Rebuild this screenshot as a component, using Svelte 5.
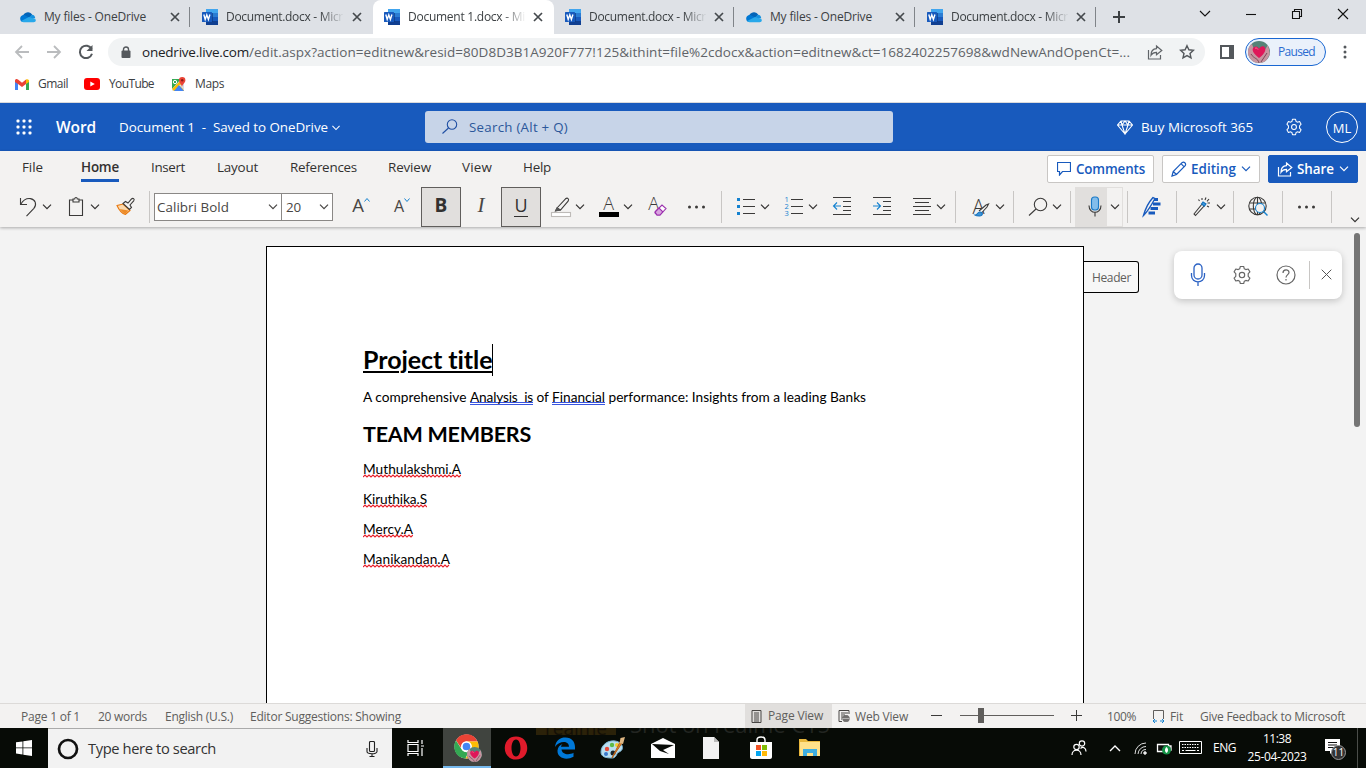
<script>
  const tabs = [
    { icon: 'cloud', title: 'My files - OneDrive', w: 102 },
    { icon: 'word', title: 'Document.docx - Micr', w: 117 },
    { icon: 'word', title: 'Document 1.docx - Mi', w: 117, active: true },
    { icon: 'word', title: 'Document.docx - Micr', w: 117 },
    { icon: 'cloud', title: 'My files - OneDrive', w: 102 },
    { icon: 'word', title: 'Document.docx - Micr', w: 117 }
  ];
  const menus = [
    { t: 'File', w: 21, gap: 22 },
    { t: 'Home', w: 38, gap: 38, active: true },
    { t: 'Insert', w: 34, gap: 32 },
    { t: 'Layout', w: 41, gap: 32 },
    { t: 'References', w: 67, gap: 32 },
    { t: 'Review', w: 43, gap: 31 },
    { t: 'View', w: 30, gap: 31 },
    { t: 'Help', w: 28, gap: 31 }
  ];
  const left = [
    ['undo', 16], ['chev', 0], ['clip', 10], ['chev', 0], ['painter', 11], ['sep', 12]
  ];
  const right = [
    ['highlight', 8], ['chev', 0], ['fontcolor', 10], ['chev', 0], ['clear', 10], ['dots', 16], ['sep', 12],
    ['bullets', 12], ['chev', 0], ['numbers', 10], ['chev', 0], ['outdent', 10], ['indent', 16], ['align', 16], ['chev', 0], ['sep', 7],
    ['styles', 13], ['chev', 0], ['sep', 6], ['find', 12], ['chev', 0], ['sep', 6]
  ];
  const far = [
    ['sep', 5], ['editor', 12], ['sep', 12], ['wand', 13], ['chev', 0], ['sep', 5],
    ['globe', 12], ['sep', 12], ['dots', 12], ['sep', 12]
  ];
  const members = [
    { t: 'Muthulakshmi.A', w: 98 },
    { t: 'Kiruthika.S', w: 64 },
    { t: 'Mercy.A', w: 50 },
    { t: 'Manikandan.A', w: 87 }
  ];

  // Spreads the letters of a label over a fixed width.
  function fit(node, width) {
    const natural = node.getBoundingClientRect().width;
    node.style.letterSpacing = (width - natural) / node.textContent.length + 'px';
  }
  function wave(w) {
    let d = 'M0 3';
    for (let x = 2, up = true; x <= w; x += 2, up = !up) d += `L${x} ${up ? 1 : 3}`;
    return d;
  }
</script>

{#snippet cloud()}
  <svg width="16" height="16" viewBox="0 0 16 16"><path d="M2 8.500C3 5 6 2.600 9 3.400c1.500.3 2.500 1.100 3.200 2.400L9.600 9z" fill="#0364b8"/><path d="M.4 10.800C-.6 7.700 2 5.500 4.500 6l5.500 3-6.800 4C1.800 13.200.7 12.200.4 10.800z" fill="#0078d4"/><path d="M9 8.200 12 5.800c2 .1 3 1.700 3.300 3.400L12 10z" fill="#1490df"/><path d="M1.100 12.100 9 8.100l6.500 2.100c.9 1.300-.2 3-1.900 3H3.500c-1 0-1.800-.4-2.400-1.100z" fill="#28a8ea"/></svg>
{/snippet}
{#snippet word()}
  <svg width="16" height="16" viewBox="0 0 16 16"><path d="M4 0h12v4H4z" fill="#41a5ee"/><path d="M4 4h12v4H4z" fill="#2b7cd3"/><path d="M4 8h12v4H4z" fill="#185abd"/><path d="M4 12h12v4H4z" fill="#103f91"/><path d="M4 4h7v9H4z" fill="#0d3577" opacity=".6"/><rect y="3" width="10" height="10" rx=".6" fill="#185abd"/><path d="m1.800 5.500 1.400 5 1.600-4.700 1.600 4.700 1.500-5" fill="none" stroke="#fff" stroke-width="1.400"/></svg>
{/snippet}
{#snippet chev(w = 9, c = 'currentColor')}
  <svg width={w} height="6" viewBox="0 0 9 6"><path d="m.5.700 4 4 4-4" fill="none" stroke={c} stroke-width="1.200"/></svg>
{/snippet}
{#snippet gear(n, c)}
  <svg width={n} height={n} viewBox="0 0 20 20" fill="none" stroke={c} stroke-width="1.150"><circle cx="10" cy="10" r="2.700"/><path stroke-linejoin="round" d="M8.300 1.500h3.400l.6 2.300 1.500.8 2.400-.6 1.700 2.900-1.700 1.800v2.600l1.700 1.800-1.700 2.900-2.400-.6-1.500.8-.6 2.300H8.300l-.6-2.300-1.500-.8-2.400.6-1.700-2.900 1.700-1.800V8.700L2.100 6.900 3.800 4l2.400.6 1.500-.8z"/></svg>
{/snippet}
{#snippet tool(k)}
  {#if k === 'chev'}{@render chev(10)}
  {:else}
  <svg width="24" height="24" viewBox="0 0 24 24" fill="none" stroke="#3b3a39" stroke-width="1.100">
    {#if k === 'undo'}<path d="M4.500 3v6.500H11M4.800 9.200C7 5.500 10.500 3 14.500 3.600c5 .9 6.600 6 3.400 9.800l-7.400 7.800"/>
    {:else if k === 'clip'}<path d="M9 5H5.500v15.500h13V5H15M9 7V4h1.700c.1-2 2.500-2 2.600 0H15v3z"/>
    {:else if k === 'painter'}<path d="m4 10.500 6-1.500 7 6.500-4.500 4C9 18.500 6 15 4 10.500z" fill="#fbd9ad" stroke="#e8770e"/><path d="m6.500 14 9 1.500-3.500 4z" fill="#ed8b27" stroke="none"/><path d="m10 8.500 2.500-2 2.500 1.500 3.500-4c1.500-1.500 3.500 0 2.200 1.800L17 10l1.500 2.500-2 2z" fill="#f3f2f1"/>
    {:else if k === 'highlight'}<rect x="2.500" y="17.500" width="19" height="4" fill="#fff" stroke="#bebbb8"/><path d="m8 13 8.500-9.200c2-1.500 4 .2 2.600 2.400L11.500 15zm0 0-1.500 3 4.700-1"/><path d="m8 12-2 4h4l1.500-1z" fill="#555" stroke="none"/>
    {:else if k === 'fontcolor'}<text class="glyph" x="6.200" y="15" font-size="18">A</text><path d="M2 17h20v5H2z" fill="#000" stroke="none"/>
    {:else if k === 'clear'}<text class="glyph" x="3.200" y="15" font-size="18">A</text><path d="m11 16 6-6 4 3.500-6 6.500H12l-2-2z" fill="#fff" stroke="#9b2fae"/><path d="m10 17 4-4 3.800 3.800L15 20h-3z" fill="#d9a4df" stroke="#9b2fae"/>
    {:else if k === 'dots'}<g fill="#3b3a39" stroke="none"><circle cx="4.500" cy="12" r="1.500"/><circle cx="11.500" cy="12" r="1.500"/><circle cx="18.500" cy="12" r="1.500"/></g>
    {:else if k === 'bullets'}<path d="M9 4.500h12M9 11.500h12M9 18.500h12"/><path d="M3 3h3v3H3zM3 10h3v3H3zM3 17h3v3H3z" fill="#1482d0" stroke="none"/>
    {:else if k === 'numbers'}<path d="M9 4.500h12M9 11.500h12M9 18.500h12"/><g class="num"><text x="2.500" y="7">1</text><text x="2.500" y="14">2</text><text x="2.500" y="21">3</text></g>
    {:else if k === 'outdent'}<path d="M3 2.500h18M13 6.500h8M13 11.500h8M13 15.500h8M3 19.500h18"/><path stroke="#1482d0" d="M11 11H3.500m3.500-3.500L3.500 11 7 14.500"/>
    {:else if k === 'indent'}<path d="M3 2.500h18M13 6.500h8M13 11.500h8M13 15.500h8M3 19.500h18"/><path stroke="#1482d0" d="M3 11h7.500M7 7.500l3.500 3.500L7 14.500"/>
    {:else if k === 'align'}<path d="M3 3.500h18M5 7.500h14M3 11.500h18M5 15.500h14M3 19.500h18"/>
    {:else if k === 'styles'}<text class="glyph" x="3.500" y="18.500" font-size="20">A</text><path d="m10 16 7-6 2.500-1-1.500 3-5.500 6" fill="#f3f2f1"/><path d="M6 20c3 0 2-3 5-3 3.500 0 3 4-.5 4-2 0-3.500-.2-4.500-1z" fill="#3b94d9" stroke="#1472bd"/>
    {:else if k === 'find'}<circle cx="14.500" cy="9.500" r="6.200"/><path d="m10 14-7 6.500"/>
    {:else if k === 'mic'}<rect x="8.500" y="2" width="7" height="13" rx="3" fill="#83bdeb" stroke="#1b7ac7"/><path d="M6 10.500c0 9 12 9 12 0M12 17.500v4"/>
    {:else if k === 'editor'}<g stroke="#185abd"><path d="M3.500 20.500C5 15 8 8 13 2.500l2 1C11.500 10 8 16 3.500 20.500z" stroke-width="1.400"/><path d="M14 4.500h4M13 9h7.500M10.500 13.500H18M8.500 18h6.500" stroke-width="3"/></g>
    {:else if k === 'wand'}<path d="m4 19 8.500-10.500 2 2L5.500 20.500z"/><path d="m11.500 9 1.500-2 3 2-1.700 2.200z" fill="#3f9bde" stroke="#1472bd"/><path d="M12 3v2M8.500 4.500l1 1.500M16 2.500 15 5M19 4l-2 2.300M20 8h-2.500M19 12l-2-1"/>
    {:else if k === 'globe'}<circle cx="11.500" cy="11" r="8.700"/><ellipse cx="11.500" cy="11" rx="4.200" ry="8.700"/><path d="M3.500 8h16M3.500 14h9M11.500 2.300v17.400"/><circle cx="14" cy="13" r="4.500" fill="#f3f2f1" stroke="#1482d0"/><path stroke="#1482d0" stroke-width="1.500" d="m17.500 16.500 4 4"/>
    {/if}
  </svg>
  {/if}
{/snippet}
{#snippet tools(list)}
  {#each list as [k, gap]}
    <div class="tool {k === 'sep' ? 'sep' : k === 'chev' ? 'tchev' : ''}" style="margin-left:{gap}px">{#if k !== 'sep'}{@render tool(k)}{/if}</div>
  {/each}
{/snippet}
{#snippet share(c)}
  <svg width="16" height="16" viewBox="0 0 16 16" fill="none" stroke={c} stroke-width="1.200"><path d="M1.500 6v9h12v-4M9.500 2l5.300 4.500-5.300 4.300V8.300C7 8.300 5.300 9 4 11.200c0-4 2.300-6.300 5.500-6.500z"/></svg>
{/snippet}
{#snippet heart(n)}
  <svg width={n} height={n} viewBox="0 0 22 22"><defs><clipPath id="av{n}"><circle cx="11" cy="11" r="11"/></clipPath></defs><g clip-path="url(#av{n})"><path d="M0 0h22v22H0z" fill="#568377"/><path d="M0 5 4 3l3 8 4 5 5-6 4-6 2 9-5 9H4L0 16z" fill="#c894a0"/><path d="M3 13c3 5 7 4 8 9M19 12l-6 9" stroke="#764b59" fill="none"/><path d="M11 17C7 14 3.500 10 5 7c1.800-2.500 5-2 6 .8C12.500 5 15.500 4.500 17 6.800 18.500 10 15 14.500 11 17z" fill="#df1759"/><path d="M7 7.500c1-1 2-.5 3 1" stroke="#ff7598" fill="none"/></g></svg>
{/snippet}

<div class="screen">
  <div class="tabstrip">
    {#each tabs as tab, i}
      <div class="tab" class:active={tab.active} class:line={i !== 1 && i !== 2}>
        {#if tab.icon === 'cloud'}{@render cloud()}{:else}{@render word()}{/if}
        <div class="ttl" class:fade={tab.icon === 'word'}><span class="t" use:fit={tab.w}>{tab.title}</span></div>
        <svg class="x" width="10" height="10" viewBox="0 0 10 10"><path d="m1 1 8 8M9 1 1 9" stroke="#45494d" stroke-width="1.700"/></svg>
      </div>
    {/each}
    <svg class="plus" width="12" height="12" viewBox="0 0 12 12"><path d="M6 0v12M0 6h12" stroke="#3c4043" stroke-width="2"/></svg>
    <div class="wincontrols">
      <svg width="12" height="12" viewBox="0 0 12 12"><path d="m1 3 5 5 5-5" /></svg>
      <svg width="12" height="12" viewBox="0 0 12 12"><path d="M1 6.500h10" /></svg>
      <svg width="12" height="12" viewBox="0 0 12 12"><path d="M1.500 3.500h7v7h-7zM3.500 3V1.500h7v7H9" /></svg>
      <svg width="12" height="12" viewBox="0 0 12 12"><path d="m1 1 10 10M11 1 1 11" /></svg>
    </div>
  </div>

  <div class="addressbar">
    <svg width="16" height="16" viewBox="0 0 16 16" fill="none" stroke="#babcbe" stroke-width="1.800"><path d="M15 8H2m6-6L2 8l6 6"/></svg>
    <svg width="16" height="16" viewBox="0 0 16 16" fill="none" stroke="#babcbe" stroke-width="1.800"><path d="M1 8h13M8 2l6 6-6 6"/></svg>
    <svg width="16" height="16" viewBox="0 0 16 16" fill="none" stroke="#54585c" stroke-width="2"><path d="M13.600 5A6.200 6.200 0 1 0 14 9.800"/><path d="M14.500 1v6h-6z" fill="#54585c" stroke="none"/></svg>
    <div class="omni">
      <svg width="10" height="12" viewBox="0 0 10 12"><path d="M2.500 5V3.200c0-3 5-3 5 0V5" fill="none" stroke="#54585c" stroke-width="1.400"/><rect x=".5" y="4.500" width="9" height="7.500" rx="1" fill="#54585c"/></svg>
      <div class="url"><span class="t host" use:fit={107}>onedrive.live.com</span><span class="t" use:fit={881}>/edit.aspx?action=editnew&amp;resid=80D8D3B1A920F777!125&amp;ithint=file%2cdocx&amp;action=editnew&amp;ct=1682402257698&amp;wdNewAndOpenCt=...</span></div>
      {@render share('#606468')}
      <svg class="star" width="16" height="16" viewBox="0 0 16 16"><path d="m8 1.700 1.900 4.100 4.500.5L11 9.400l1 4.500-4-2.300-4 2.300 1-4.500-3.400-3.100 4.500-.5z" fill="none" stroke="#54585c" stroke-width="1.400"/></svg>
    </div>
    <svg class="panel" width="14" height="14" viewBox="0 0 14 14"><rect x="1" y="1" width="12" height="12" fill="#fff" stroke="#54585c" stroke-width="2"/><path d="M9 0h5v14H9z" fill="#54585c"/></svg>
    <div class="paused">{@render heart(22)}<span class="t" use:fit={37}>Paused</span></div>
    <svg class="kebab" width="4" height="14" viewBox="0 0 4 14" fill="#54585c"><circle cx="2" cy="2" r="1.500"/><circle cx="2" cy="7" r="1.500"/><circle cx="2" cy="12" r="1.500"/></svg>
  </div>

  <div class="bookmarks">
    <svg width="14" height="11" viewBox="0 0 14 11"><path d="M0 1v10h3V4z" fill="#4285f4"/><path d="M14 1v10h-3V4z" fill="#34a853"/><path d="M0 1.500C.5-.2 2-.2 3 .6l4 3.200 4-3.200V5L7 8 3 5 0 3z" fill="#ea4335"/><path d="M11 .6c1.500-1 3-.2 3 1.500V3l-3 2z" fill="#fbbc04"/></svg>
    <span class="t" use:fit={30}>Gmail</span>
    <svg class="yt" width="16" height="12" viewBox="0 0 16 12"><rect width="16" height="12" rx="3" fill="#f00"/><path d="m6.300 3.400 4.500 2.600-4.500 2.600z" fill="#fff"/></svg>
    <span class="t" use:fit={45}>YouTube</span>
    <svg class="maps" width="15" height="15" viewBox="0 0 15 15"><path d="M1 2h12v12H1z" fill="#e8eaed"/><path d="M1 2h9L1 12z" fill="#34a853"/><path d="m1 12 8-8 4 10H3z" fill="#fbbc04"/><path d="m3 14 5-6 5 6z" fill="#4285f4"/><path d="m8 8 5-1v6z" fill="#dadce0"/><circle cx="4" cy="5" r="1.700" fill="none" stroke="#fff"/><path d="M11 10C10.500 7 8 6 8 3.200a3.200 3.200 0 0 1 6.400 0C14.400 6 11.500 7 11 10z" fill="#ea4335"/><circle cx="11.200" cy="3.200" r="1.200" fill="#8e1d15"/></svg>
    <span class="t" use:fit={29}>Maps</span>
  </div>

  <div class="suite">
    <svg class="waffle" width="16" height="16" viewBox="0 0 16 16" fill="#fff">
      {#each [0, 1, 2] as r}{#each [0, 1, 2] as c}<rect x={.5 + c * 6} y={.5 + r * 6} width="3" height="3" rx="1"/>{/each}{/each}
    </svg>
    <b class="t brand" use:fit={40}>Word</b>
    <span class="t dn" use:fit={209}>{'Document 1  -  Saved to OneDrive'}</span>
    <span class="dchev">{@render chev(8)}</span>
    <div class="search">
      <svg width="16" height="16" viewBox="0 0 16 16" fill="none" stroke="#1f4fa3" stroke-width="1.100"><circle cx="10" cy="5.500" r="4.700"/><path d="m6.500 9-6 5.500"/></svg>
      <span class="t" use:fit={99}>Search (Alt + Q)</span>
    </div>
    <svg class="gem" width="16" height="15" viewBox="0 0 16 15" fill="none" stroke="#fff" stroke-width="1.100"><path d="M4 1h8l3.500 4L8 14 .5 5zM.5 5h15M4 1l1 4 3 9 3-9 1-4M5 5l3-4 3 4"/></svg>
    <span class="t" use:fit={112}>Buy Microsoft 365</span>
    <span class="sgear">{@render gear(18, '#fff')}</span>
    <div class="avatar">ML</div>
  </div>

  <div class="ribbon">
    <div class="menus">
      {#each menus as m}
        <div class="menu" class:active={m.active} style="margin-left:{m.gap}px"><span class="t" use:fit={m.w}>{m.t}</span></div>
      {/each}
      <div class="actions">
        <div class="btn cm"><svg width="14" height="14" viewBox="0 0 14 14"><path d="M.5.500h13v9H5.500L2.500 13V9.500h-2z" fill="none" stroke="#185abd" stroke-width="1.200"/></svg><b class="t" use:fit={69}>Comments</b></div>
        <div class="btn ed"><svg width="16" height="16" viewBox="0 0 16 16"><path d="M1 15 2.200 10.500 11 1.700c2-1.500 4.500.8 3.200 3L5.500 13.500zM10 2.700l3.200 3.200M2.200 10.500l3.300 3" fill="none" stroke="#185abd" stroke-width="1.200"/></svg><b class="t" use:fit={45}>Editing</b>{@render chev(10)}</div>
        <div class="btn sh">{@render share('#fff')}<b class="t" use:fit={37}>Share</b>{@render chev(10)}</div>
      </div>
    </div>
    <div class="tools">
      {@render tools(left)}
      <div class="combo font"><span class="t" use:fit={72}>Calibri Bold</span>{@render chev(10)}</div>
      <div class="combo size"><span class="t" use:fit={15}>20</span>{@render chev(10)}</div>
      <div class="letter grow">A<svg width="6" height="4" viewBox="0 0 6 4"><path d="m.5 3.500 2.500-3 2.500 3" fill="none" stroke="#1482d0"/></svg></div>
      <div class="letter shrink">A<svg width="6" height="4" viewBox="0 0 6 4"><path d="m.5.500 2.500 3 2.500-3" fill="none" stroke="#1482d0"/></svg></div>
      <div class="fmt on"><b>B</b></div>
      <div class="fmt it">I</div>
      <div class="fmt on u"><span>U</span></div>
      {@render tools(right)}
      <div class="micbox">{@render tool('mic')}</div>
      <div class="micchev">{@render chev(10)}</div>
      {@render tools(far)}
      <div class="collapse">{@render chev(10)}</div>
    </div>
  </div>

  <div class="canvas">
    <div class="page">
      <div class="title"><b class="t" use:fit={130}>Project title</b></div>
      <p class="body"><span class="t" use:fit={107}>{'A comprehensive '}</span><span class="t gram" use:fit={63}>{'Analysis  is'}</span><span class="t" use:fit={19}>{' of '}</span><span class="t gram" use:fit={53}>Financial</span><span class="t" use:fit={261}>{' performance: Insights from a leading Banks'}</span></p>
      <div class="team"><b class="t" use:fit={168}>TEAM MEMBERS</b></div>
      {#each members as m}
        <p class="member"><span class="t" use:fit={m.w}>{m.t}</span><svg width={m.w} height="4"><path d={wave(m.w)} fill="none" stroke="#e8202a" stroke-width="1.100"/></svg></p>
      {/each}
    </div>
    <div class="hdr"><span class="t" use:fit={39}>Header</span></div>
    <div class="dictate">
      <svg width="16" height="24" viewBox="0 0 16 24" fill="none" stroke="#2b62c4" stroke-width="1.300"><rect x="4" y="1" width="8" height="15" rx="4"/><path d="M1.500 10v2.500c0 8.500 13 8.500 13 0V10M8 19v4"/></svg>
      {@render gear(20, '#666')}
      <svg width="20" height="20" viewBox="0 0 20 20" fill="none" stroke="#666" stroke-width="1.200"><circle cx="10" cy="10" r="9"/><path d="M7 8c0-4 6-4 6-.4 0 2-3 2.200-3 5M10 14v1.500"/></svg>
      <i></i>
      <svg width="11" height="11" viewBox="0 0 11 11"><path d="m.7.700 9.600 9.600m0-9.600L.7 10.300" stroke="#555"/></svg>
    </div>
    <div class="scroll"></div>
  </div>

  <div class="status">
    <span class="t s1" use:fit={59}>Page 1 of 1</span>
    <span class="t s2" use:fit={49}>20 words</span>
    <span class="t s2" use:fit={68}>English (U.S.)</span>
    <span class="t s2 s4" use:fit={151}>Editor Suggestions: Showing</span>
    <div class="pv"><svg width="11" height="13" viewBox="0 0 11 13"><path d="M1 .5h9v12H1zM3 3h5M3 5h5M3 7h5M3 9h5M3 11h5" fill="none" stroke="#484644"/></svg><span class="t" use:fit={55}>Page View</span></div>
    <div class="wv"><svg width="12" height="13" viewBox="0 0 12 13"><path d="M4 11.500H1V.500h10V4M3 3h7M3 5h4M3 7h2M3 9h1" fill="none" stroke="#484644"/><circle cx="8" cy="8.500" r="3.600" fill="#484644"/><path d="M4.500 8.500h7M8 5v7M6 5.500v6M10 5.500v6" stroke="#f3f2f1" stroke-width=".5"/></svg><span class="t" use:fit={53}>Web View</span></div>
    <div class="minus"></div>
    <div class="slider"><i></i></div>
    <svg class="zplus" width="11" height="11" viewBox="0 0 11 11"><path d="M5.500 0v11M0 5.500h11" stroke="#3b3a39"/></svg>
    <span class="t pct" use:fit={29}>100%</span>
    <svg class="fitic" width="13" height="13" viewBox="0 0 13 13" fill="none"><path d="M1.500 9V.500h10V9" stroke="#605e5c"/><path d="M1 11h4m3 0h4M3 9l-2 2 2 2M10 9l2 2-2 2" stroke="#1482d0"/></svg>
    <span class="t ft" use:fit={13}>Fit</span>
    <span class="t fb" use:fit={145}>Give Feedback to Microsoft</span>
  </div>

  <div class="taskbar">
    <div class="stamp"><div class="plate">realme</div><span class="t" use:fit={200}>Shot on realme C15</span></div>
    <div class="start"><svg width="16" height="16" viewBox="0 0 16 16" fill="#fff"><path d="m0 2.300 6.500-.9v6.100H0zM7.300 1.300 16 0v7.500H7.300zM0 8.300h6.500v6.200L0 13.600zM7.300 8.300H16V16l-8.700-1.300z"/></svg></div>
    <div class="tsearch">
      <svg width="22" height="22" viewBox="0 0 22 22"><circle cx="11" cy="11" r="9" fill="none" stroke="#111" stroke-width="2.700"/></svg>
      <span class="t" use:fit={128}>Type here to search</span>
      <svg class="tm" width="12" height="16" viewBox="0 0 12 16" fill="none" stroke="#222" stroke-width="1.100"><rect x="3.500" y=".5" width="5" height="10" rx="1"/><path d="M1 7v3.500c0 3 10 3 10 0V7M6 13v2.500M3.500 15.500h5"/></svg>
    </div>
    <div class="app"><svg width="18" height="16" viewBox="0 0 18 16" fill="none" stroke="#fff" stroke-width="1.200"><path d="M1 0v2.500h10V0M1 16v-2.500h10V16M1 4.500h10v7H1zM15 0v4M15 8v8M14 6h3"/></svg></div>
    <div class="app live">
      <svg width="26" height="26" viewBox="0 0 26 26"><circle cx="12.500" cy="12.500" r="12" fill="#fff"/><path d="M2 6.500A12 12 0 0 1 23.500 7.500H12.500A5.600 5.600 0 0 0 7.200 14z" fill="#ea4335"/><path d="M2 6.500 7.400 15a5.600 5.600 0 0 0 7 3L11.500 24.500C2 24-2.500 14 2 6.500z" fill="#34a853"/><path d="M12.500 7.500h11c3.500 7.500-2 17-12 17L17 15.500c1.800-3 0-7-4.500-8z" fill="#fbbc04"/><circle cx="12.500" cy="12.500" r="4.600" fill="#4285f4" stroke="#fff" stroke-width="1.500"/></svg>
      <div class="mini">{@render heart(15)}</div>
    </div>
    <div class="app a3"><svg width="24" height="24" viewBox="0 0 24 24"><path fill-rule="evenodd" d="M12 .5c15 0 15 23 0 23s-15-23 0-23zm0 3c-6 0-6 17 0 17s6-17 0-17z" fill="#e01b2b"/></svg></div>
    <div class="app a4"><svg width="22" height="22" viewBox="0 0 22 22"><path d="M1 10C2 3 6 .5 11.500.500 18 .500 21 5 21 10v2.500H7.500c.5 5 7.500 6 12 3.300v4C12 24 3 21 3.500 13.500 3.700 10 6 8 8.500 7 7.500 8 7 9 7 9.800h8C15 3 5 3.800 1 10z" fill="#0078d7"/></svg></div>
    <div class="app a5"><svg width="26" height="24" viewBox="0 0 26 24"><path d="M1 16C1 9 8 4 15 5c8 1 10 9 4 11-3 1-2 6-7 6-6 0-11-1-11-6z" fill="#b9dff1" stroke="#7bb5d2"/><circle cx="7" cy="13" r="2.200" fill="#e64b3c"/><circle cx="12" cy="9" r="2.200" fill="#5cb947"/><circle cx="6" cy="18" r="2" fill="#3979cc"/><circle cx="17" cy="9" r="2" fill="#f5cb2f"/><circle cx="13" cy="17" r="2.500" fill="#17232a"/><path d="m12 22 8-16 2 1z" fill="#e28a30" stroke="#b86019"/><path d="m19.500 7 1-5L25 1l-2 7z" fill="#dfb783"/></svg></div>
    <div class="app a6"><svg width="24" height="20" viewBox="0 0 24 20"><path d="M0 6 12 0l12 6v14H0z" fill="#fff"/><path d="m1 6 22 1-11 5 6 4-9-3z" fill="#080b07"/></svg></div>
    <div class="app a7"><svg width="16" height="22" viewBox="0 0 16 22"><path d="M0 0h11l5 5v17H0z" fill="#f2f2f2"/><path d="M11 0v5h5z" fill="#bbb"/></svg></div>
    <div class="app a8"><svg width="24" height="24" viewBox="0 0 24 24"><path d="M8 7V4c0-4 8-4 8 0v3" fill="none" stroke="#fff" stroke-width="1.400"/><path d="M1 6h22v15c0 1-1 2-2 2H3c-1 0-2-1-2-2z" fill="#fff"/><path d="M7 9h5v5H7z" fill="#f35325"/><path d="M13 9h5v5h-5z" fill="#81bc06"/><path d="M7 15h5v5H7z" fill="#05a6f0"/><path d="M13 15h5v5h-5z" fill="#ffba08"/></svg></div>
    <div class="app a9"><svg width="22" height="20" viewBox="0 0 22 20"><path d="M0 1h7l2 2h12v15H0z" fill="#e8b73c"/><path d="M1 4h20v14H1z" fill="#ffe18a"/><path d="M4 18v-7h14v7h-4v-3H8v3z" fill="#3faee0"/></svg></div>
    <div class="tray">
      <svg class="ppl" width="16" height="16" viewBox="0 0 16 16" fill="none" stroke="#fff" stroke-width="1.200"><circle cx="5.500" cy="7" r="2.700"/><path d="M1 15c0-6.500 9-6.500 9 0"/><circle cx="11" cy="3.500" r="2.700"/><path d="M9.500 8.500C12 6 15 8 15 11.500"/></svg>
      <svg class="up" width="12" height="8" viewBox="0 0 12 8"><path d="m1 7 5-5 5 5" fill="none" stroke="#fff" stroke-width="1.400"/></svg>
      <svg class="wifi" width="14" height="14" viewBox="0 0 14 14" fill="none" stroke="#ddd"><path d="M1 13A11 11 0 0 1 12 2M4 13a8 8 0 0 1 8-7.500M7 13a5 5 0 0 1 5-4.500"/><circle cx="11" cy="12" r="1.300" fill="#fff"/></svg>
      <svg class="bat" width="16" height="14" viewBox="0 0 16 14"><path d="M1.500 3.500h11v7h-11zM13 5h2v4h-2" fill="#10120f" stroke="#fff" stroke-width="1.300"/><circle cx="10.500" cy="9" r="4.500" fill="#159447"/><path d="M10.500 6C8 8 9 11 10.500 12 12 11 13 8 10.500 6z" fill="#fff"/></svg>
      <svg class="kb" width="23" height="14" viewBox="0 0 23 14" fill="none" stroke="#fff"><path d="M.5.500h22v12H.5z"/><path d="M3 3.500h17M3 6.500h17" stroke-dasharray="1.500 1"/><path d="M3 9.500h2m1.500 0h10m1.500 0h2"/></svg>
      <span class="t eng" use:fit={23}>ENG</span>
      <div class="clock"><span class="t" use:fit={28}>11:38</span><span class="t" use:fit={59}>25-04-2023</span></div>
      <div class="note"><svg width="16" height="17" viewBox="0 0 16 17"><path d="M0 0h15v12H8l-3 3v-3H0z" fill="#fff"/><path d="M3 3.500h9M3 6h9M3 8.500h6" stroke="#111" stroke-width="1.200"/></svg><div class="count">11</div></div>
      <div class="peek"></div>
    </div>
  </div>
</div>

<style>
  :global(body) { margin: 0; overflow: hidden; }
  .screen { width: 1366px; height: 768px; display: flex; flex-direction: column; overflow: hidden; font-family: "Open Sans", "Noto Sans", sans-serif; font-size: 12px; color: #3c4043; background: #fff; }
  .screen :global(svg) { flex: none; display: block; }
  .t { white-space: pre; flex: none; display: inline-block; }
  .glyph { fill: #3b3a39; stroke: none; font-weight: 300; }
  .num { fill: #1482d0; stroke: none; font-size: 7.500px; }
  .tabstrip { height: 34px; flex: none; background: #dee1e6; display: flex; padding-left: 9px; box-sizing: border-box; font-size: 12px; }
  .tab { width: 181px; flex: none; display: flex; align-items: center; padding-left: 11px; box-sizing: border-box; position: relative; }
  .tab:nth-child(-n+2) { width: 182px; }
  .tab.line::after { content: ""; position: absolute; right: 1px; top: 7px; width: 1px; height: 20px; background: #808489; }
  .tab.active { background: #fff; border-radius: 8px 8px 0 0; }
  .ttl { width: 118px; margin: -2px 0 0 8px; display: flex; }
  .ttl.fade { -webkit-mask-image: linear-gradient(90deg, #000 80%, transparent); mask-image: linear-gradient(90deg, #000 80%, transparent); }
  .x { margin-left: 7px; }
  .tab:first-child .x, .tab:nth-child(2) .x { margin-left: 8px; }
  .plus { margin: 11px 0 0 16px; }
  .wincontrols { display: flex; gap: 34px; margin: 8px 0 0 74px; fill: none; stroke: #111; stroke-width: 1.100; }
  .addressbar { height: 36px; flex: none; display: flex; align-items: center; }
  .addressbar > svg:nth-child(1) { margin-left: 14px; }
  .addressbar > svg:nth-child(2), .addressbar > svg:nth-child(3) { margin-left: 16px; }
  .omni { width: 1097px; height: 28px; margin-left: 14px; border-radius: 14px; background: #f1f3f4; display: flex; align-items: center; box-sizing: border-box; padding-left: 13px; color: #5f6368; font-size: 13.500px; }
  .url { display: flex; width: 989px; margin: -1px 16px 0 11px; }
  .host { color: #202124; }
  .star { margin-left: 16px; }
  .panel { margin-left: 15px; }
  .paused { width: 81px; height: 28px; box-sizing: border-box; border: 1px solid #1967d2; border-radius: 14px; background: #eaf1fb; margin-left: 11px; display: flex; align-items: center; padding-left: 2px; color: #2b6bd0; gap: 8px; }
  .paused .t, .bookmarks .t { margin-top: -1px; }
  .kebab { margin-left: 17px; }
  .bookmarks { height: 33px; flex: none; display: flex; align-items: center; padding: 0 0 4px 15px; box-sizing: border-box; border-bottom: 1px solid #d9dadc; gap: 9px; }
  .bookmarks .yt { margin-left: 7px; }
  .bookmarks .maps { margin-left: 8px; }
  .suite { height: 48px; flex: none; background: #185abd; color: #fff; display: flex; align-items: center; font-size: 13.400px; }
  .waffle { margin-left: 16px; }
  .brand { font-size: 15.500px; margin-left: 24px; font-weight: 600; }
  .dn { margin-left: 23px; }
  .dchev { margin: 2px 0 0 4px; }
  .search { width: 468px; height: 32px; border-radius: 3px; background: #c7d4e8; margin-left: 85px; display: flex; align-items: center; color: #2b579a; box-sizing: border-box; padding-left: 17px; gap: 11px; font-size: 13.300px; }
  .gem { margin: 0 8px 0 224px; }
  .sgear { margin-left: 32px; }
  .avatar { width: 32px; height: 32px; border: 1px solid #fff; border-radius: 50%; box-sizing: border-box; margin-left: 23px; line-height: 32px; text-align: center; font-size: 13px; }
  .ribbon { height: 76px; flex: none; background: #f3f2f1; color: #323130; position: relative; z-index: 2; box-shadow: 0 1px 3px rgba(0,0,0,.3); }
  .menus { height: 36px; display: flex; font-size: 13.400px; }
  .menu { height: 31px; line-height: 33px; box-sizing: border-box; }
  .menu.active { border-bottom: 3px solid #185abd; font-weight: 600; }
  .actions { margin-left: auto; display: flex; padding: 4px 8px 0 0; }
  .btn { height: 28px; box-sizing: border-box; border: 1px solid #c8c6c4; border-radius: 2px; background: #fff; color: #185abd; display: flex; align-items: center; }
  .btn b { font-weight: 600; }
  .cm { width: 107px; padding-left: 9px; gap: 5px; }
  .ed { width: 98px; margin-left: 8px; padding-left: 8px; gap: 4px; }
  .ed b { margin-right: 1px; }
  .sh { width: 90px; margin-left: 8px; padding-left: 8px; gap: 4px; background: #185abd; border-color: #185abd; color: #fff; }
  .sh b { margin-right: 1px; }
  .tools { height: 40px; display: flex; align-items: center; }
  .tool { width: 24px; height: 24px; flex: none; display: flex; align-items: center; justify-content: center; }
  .tool.tchev { width: 14px; }
  .tool.sep { width: 1px; height: 32px; background: #c8c6c4; }
  .combo { height: 28px; background: #fff; border: 1px solid #8a8886; box-sizing: border-box; display: flex; align-items: center; justify-content: space-between; padding: 0 3px 0 2px; color: #484644; font-size: 13.400px; }
  .font { width: 128px; margin-left: 4px; }
  .size { width: 52px; margin-left: -1px; padding-left: 4px; }
  .letter { width: 24px; display: flex; justify-content: center; font-size: 18.500px; height: 28px; line-height: 24px; color: #484644; }
  .letter svg { margin: 5px 0 0 0; }
  .grow { margin-left: 16px; }
  .shrink { margin-left: 17px; font-size: 16px; line-height: 27px; }
  .fmt { width: 40px; height: 40px; box-sizing: border-box; flex: none; text-align: center; line-height: 37px; font-size: 18px; }
  .fmt.on { background: #e1dfdd; border: 1px solid #605e5c; line-height: 35px; }
  .fmt.on b { font-size: 19px; }
  .shrink + .fmt { margin-left: 7px; }
  .fmt.it { font-family: "Liberation Serif", serif; font-style: italic; font-size: 21px; color: #484644; }
  .u span { border-bottom: 1px solid #323130; display: inline-block; line-height: 20px; height: 21px; }
  .micbox { width: 32px; height: 40px; background: #e1dfdd; margin-left: 4px; padding-left: 8px; box-sizing: border-box; display: flex; align-items: center; }
  .micchev { width: 16px; margin-right: -1px; height: 40px; border: 1px solid #e1dfdd; border-left: 0; box-sizing: border-box; display: flex; align-items: center; justify-content: center; }
  .collapse { margin: 25px 0 0 18px; }
  .canvas { height: 476px; flex: none; background: #f3f3f3; display: flex; overflow: hidden; padding-left: 266px; position: relative; }
  .page { width: 818px; height: 520px; flex: none; box-sizing: border-box; margin-top: 19px; background: #fff; border: 1px solid #000; padding: 97px 0 0 96px; color: #000; font-family: Lato, sans-serif; font-size: 13.700px; }
  .title { height: 32px; width: 129px; line-height: 31px; font-size: 25px; border-right: 1px solid #000; }
  .title .t { text-decoration: underline; text-decoration-thickness: 2px; text-underline-offset: 2px; }
  .body { margin: 11px 0 0; height: 20px; line-height: 20px; display: flex; font-size: 13.700px; }
  .gram { height: 15px; border-bottom: 3px double #3955e0; }
  .team { margin-top: 13px; height: 28px; line-height: 28px; font-size: 21.500px; }
  .member { margin: 0; height: 30px; line-height: 20px; display: flex; flex-direction: column; align-items: flex-start; }
  .team + .member { margin-top: 11px; }
  .member svg { margin-top: -5px; }
  .hdr { width: 55px; height: 32px; box-sizing: border-box; margin-top: 34px; border: 1px solid #000; border-left: 0; border-radius: 0 3px 3px 0; background: #f7f7f7; padding-left: 8px; line-height: 31px; color: #605e5c; }
  .dictate { width: 168px; height: 48px; margin: 24px 0 0 35px; background: #fff; border-radius: 8px; box-shadow: 0 2px 7px rgba(0,0,0,.2); display: flex; align-items: center; box-sizing: border-box; padding-left: 16px; }
  .dictate :global(svg:nth-child(2)) { margin-left: 26px; }
  .dictate :global(svg:nth-child(3)) { margin-left: 24px; }
  .dictate :global(svg:nth-child(5)) { margin-top: -2px; }
  .dictate i { width: 1px; height: 28px; background: #c8c6c4; margin: 0 11px 0 13px; }
  .scroll { width: 6px; height: 194px; border-radius: 3px; background: #757575; margin: 6px 0 0 12px; }
  .status { height: 25px; flex: none; background: #f3f2f1; border-top: 1px solid #dcdad8; box-sizing: border-box; display: flex; align-items: center; color: #605e5c; font-size: 12px; padding-top: 1px; }
  .status .t { margin-top: -1px; }
  .s1 { margin-left: 21px; }
  .s2 { margin-left: 18px; }
  .s4 { margin-left: 17px; }
  .pv { width: 87px; height: 25px; background: #e1dfdd; margin: -1px 0 0 344px; box-sizing: border-box; padding-left: 6px; display: flex; align-items: center; gap: 6px; }
  .wv { display: flex; align-items: center; margin-left: 6px; gap: 5px; }
  .minus { width: 11px; height: 1px; background: #3b3a39; margin: -2px 0 0 23px; }
  .slider { width: 94px; height: 1px; background: #605e5c; margin: -2px 0 0 18px; position: relative; }
  .slider i { position: absolute; left: 18px; top: -7px; width: 6px; height: 15px; background: #605e5c; }
  .zplus { margin: -2px 0 0 17px; }
  .pct { margin-left: 25px; }
  .fitic { margin-left: 16px; }
  .ft { margin-left: 5px; }
  .fb { margin-left: 17px; }
  .taskbar { height: 40px; flex: none; background: #070b06; display: flex; position: relative; overflow: hidden; color: #fff; }
  .stamp { position: absolute; left: 536px; top: 0; height: 7px; overflow: hidden; display: flex; color: #222521; font-size: 22px; line-height: 1px; }
  .stamp .t { margin-top: -4px; }
  .plate { width: 80px; height: 7px; background: #2b2209; color: #141006; text-align: center; margin-right: 14px; line-height: 0; font-size: 19px; box-sizing: border-box; }
  .start { width: 48px; display: flex; align-items: center; justify-content: center; }
  .tsearch { width: 344px; box-sizing: border-box; background: #f2f2f2; border-top: 1px solid #aaa; display: flex; align-items: center; padding-left: 9px; gap: 9px; color: #333; font-size: 14.700px; }
  .tsearch .t { margin-top: -2px; }
  .tm { margin-left: 141px; }
  .app { width: 48px; height: 40px; flex: none; display: flex; align-items: center; justify-content: center; position: relative; }
  .live { background: #40443f; border-bottom: 2px solid #76b9ed; box-sizing: border-box; margin-left: 3px; }
  .mini { position: absolute; right: 9px; top: 19px; }
  .a3 { margin-left: 1px; }
  .a4 { margin-left: 1px; }
  .a6 { margin-left: 2px; }
  .a8 { margin-left: 2px; }
  .a9 { margin-left: 1px; }
  .tray { display: flex; align-items: center; margin-left: 237px; flex: none; }
  .up { margin-left: 22px; }
  .wifi { margin-left: 13px; }
  .bat { margin-left: 8px; }
  .kb { margin-left: 7px; }
  .eng { margin: -2px 0 0 11px; font-size: 12px; }
  .clock { width: 60px; margin-left: 11px; display: flex; flex-direction: column; align-items: center; font-size: 12px; line-height: 18px; margin-top: -1px; }
  .note { margin-left: 18px; position: relative; width: 22px; height: 22px; margin-top: 4px; }
  .count { position: absolute; left: 6px; top: 6px; width: 15px; height: 15px; border-radius: 50%; background: #333; border: 1px solid #999; box-sizing: border-box; font-size: 10px; line-height: 13px; text-align: center; }
  .peek { width: 1px; height: 40px; background: #4a4d49; margin-left: 10px; }
</style>
